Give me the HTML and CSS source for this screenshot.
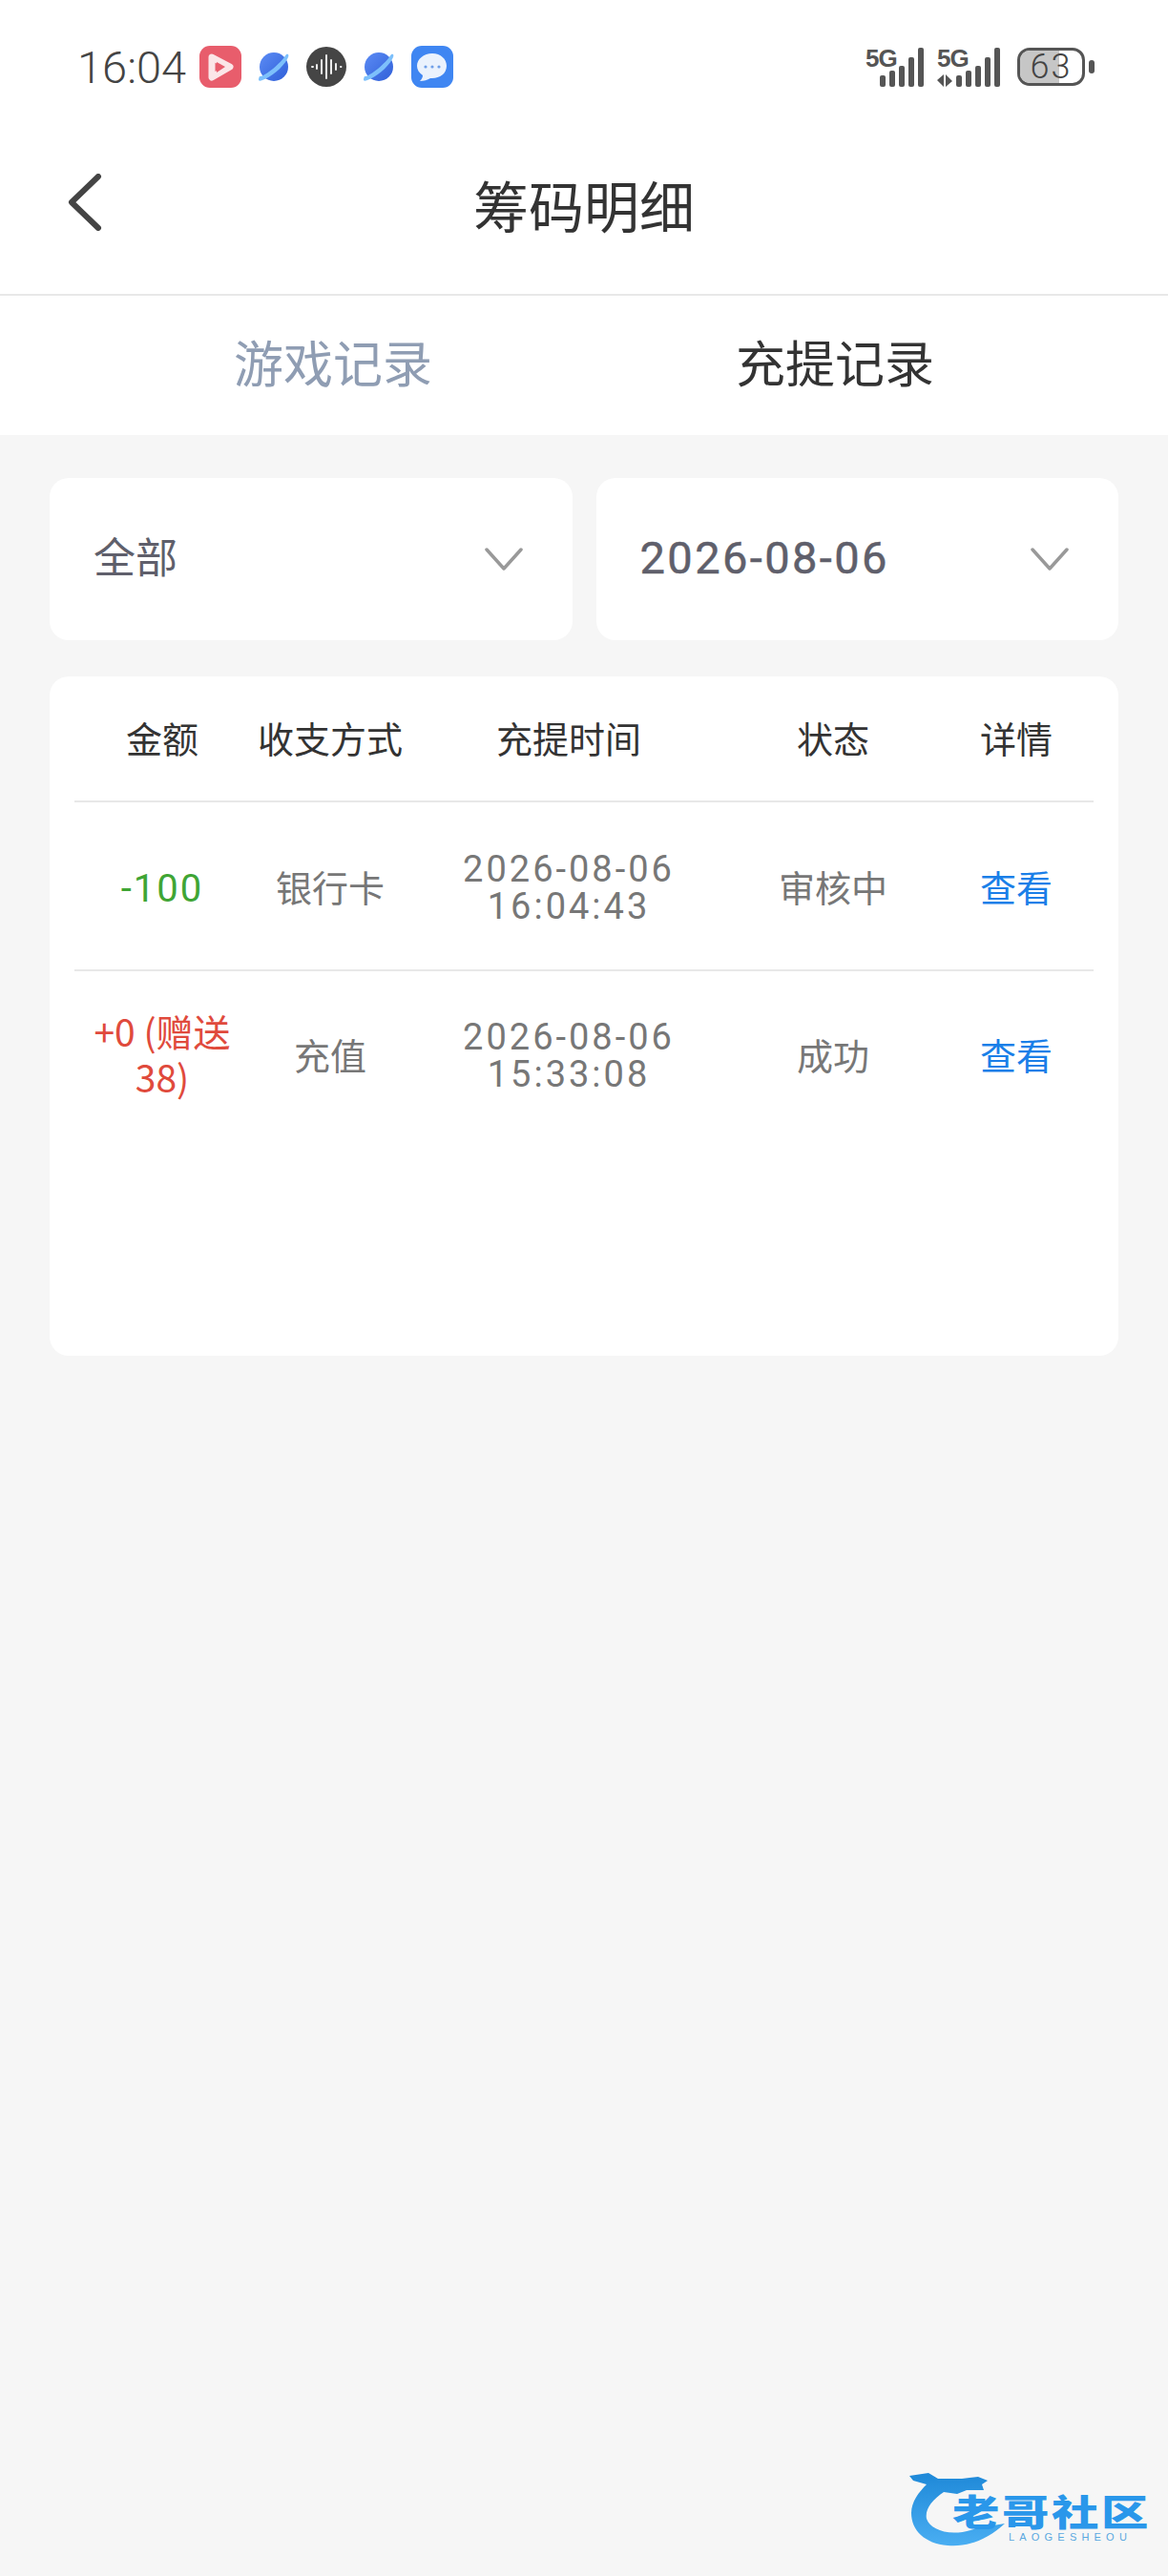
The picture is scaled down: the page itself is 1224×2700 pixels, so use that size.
FILE: index.html
```html
<!DOCTYPE html>
<html lang="zh-CN">
<head>
	<meta charset="utf-8">
	<title>筹码明细</title>
	<link rel="stylesheet" href="styles.css">
</head>
<body>
	<div class="statusBar">
		<div class="statusLeft">
			<span class="clock">16:04</span>
			<svg class="appIcon" width="44" height="44" viewBox="0 0 44 44">
				<rect width="44" height="44" rx="11" fill="#e85d6c"/>
				<path d="M13 12 L32 22 L13 33 Z" fill="#e85d6c" stroke="#fbe6e8" stroke-width="7" stroke-linejoin="round"/>
				<path d="M18 17 L27 22 L18 28 Z" fill="#e85d6c"/>
			</svg>
			<svg class="planet" width="34" height="34" viewBox="0 0 34 34">
				<defs>
					<linearGradient id="planetFill" x1="0" y1="0" x2="1" y2="1">
						<stop offset="0" stop-color="#5c8cf5"/>
						<stop offset="1" stop-color="#2f5fd8"/>
					</linearGradient>
				</defs>
				<circle cx="17" cy="17" r="15" fill="url(#planetFill)"/>
				<path d="M30 4 C33 3 33 6 31 9 C26 18 14 28 5 31 C1 33 0 31 2 27 C6 28 24 14 30 4 Z" fill="#7dc0fb"/>
			</svg>
			<svg class="voice" width="42" height="42" viewBox="0 0 42 42">
				<circle cx="21" cy="21" r="21" fill="#454545"/>
				<g stroke="#fff" stroke-width="1.8" stroke-linecap="round">
					<path d="M6 21h1M11 19v4M16 14v14M21 9v24M26 14v14M31 18v6M36 21h.5"/>
				</g>
			</svg>
			<svg class="planet secondPlanet" width="34" height="34" viewBox="0 0 34 34">
				<circle cx="17" cy="17" r="15" fill="url(#planetFill)"/>
				<path d="M30 4 C33 3 33 6 31 9 C26 18 14 28 5 31 C1 33 0 31 2 27 C6 28 24 14 30 4 Z" fill="#7dc0fb"/>
			</svg>
			<svg class="appIcon" width="44" height="44" viewBox="0 0 44 44">
				<rect width="44" height="44" rx="11" fill="#3f86f2"/>
				<path d="M22 8 C31 8 37 14 37 21 C37 29 30 34 22 34 L20 34 C17 36 13 37 9 37 C11 35 12 33 12 31 C8 28 6 25 6 21 C6 14 13 8 22 8 Z" fill="#eaf2fd"/>
				<circle cx="15" cy="22" r="1.6" fill="#6f9fe8"/>
				<circle cx="22" cy="22" r="1.6" fill="#6f9fe8"/>
				<circle cx="29" cy="22" r="1.6" fill="#6f9fe8"/>
			</svg>
		</div>
		<div class="statusRight">
			<div class="signal">
				<span class="netType">5G</span>
				<svg width="47" height="41" viewBox="0 0 47 41" class="bars">
					<rect x="0" y="29" width="6" height="12" rx="2"/>
					<rect x="10" y="24" width="6" height="17" rx="2"/>
					<rect x="20" y="19" width="6" height="22" rx="2"/>
					<rect x="30" y="10" width="6" height="31" rx="2"/>
					<rect x="40" y="0" width="6" height="41" rx="2"/>
				</svg>
			</div>
			<div class="signal secondSignal">
				<span class="netType">5G</span>
				<svg width="66" height="41" viewBox="0 0 66 41" class="bars">
					<path d="M0 34 L7 28 V41 Z M9 28 V41 L16 35 Z"/>
					<rect x="20" y="29" width="6" height="12" rx="2"/>
					<rect x="30" y="24" width="6" height="17" rx="2"/>
					<rect x="40" y="19" width="6" height="22" rx="2"/>
					<rect x="50" y="10" width="6" height="31" rx="2"/>
					<rect x="60" y="0" width="6" height="41" rx="2"/>
				</svg>
			</div>
			<div class="battery">
				<div class="batteryBody">
					<div class="batteryLevel" style="width: 63%"></div>
					<span class="batteryText">63</span>
				</div>
				<div class="batteryTip"></div>
			</div>
		</div>
	</div>

	<div class="navBar">
		<svg class="backIcon" width="36" height="60" viewBox="0 0 36 60">
			<path d="M32 3 L4 30 L32 57" fill="none" stroke="#444" stroke-width="6" stroke-linecap="round" stroke-linejoin="round"/>
		</svg>
		<h1 class="navTitle">筹码明细</h1>
	</div>

	<div class="tabs">
		<span class="tab">游戏记录</span>
		<span class="tab active">充提记录</span>
	</div>

	<div class="content">
		<div class="filters">
			<div class="filter">
				<span>全部</span>
				<svg width="40" height="24" viewBox="0 0 40 24">
					<path d="M2 2 L20 22 L38 2" fill="none" stroke="#999" stroke-width="3.5" stroke-linecap="round" stroke-linejoin="round"/>
				</svg>
			</div>
			<div class="filter">
				<span class="filterDate">2026-08-06</span>
				<svg width="40" height="24" viewBox="0 0 40 24">
					<path d="M2 2 L20 22 L38 2" fill="none" stroke="#999" stroke-width="3.5" stroke-linecap="round" stroke-linejoin="round"/>
				</svg>
			</div>
		</div>

		<div class="recordCard">
			<div class="row headRow">
				<div>金额</div>
				<div>收支方式</div>
				<div>充提时间</div>
				<div>状态</div>
				<div>详情</div>
			</div>
			<div class="row">
				<div class="minus">-100</div>
				<div>银行卡</div>
				<div class="time">2026-08-06<br>16:04:43</div>
				<div>审核中</div>
				<div class="link">查看</div>
			</div>
			<div class="row lastRow">
				<div class="plus">+0 (赠送38)</div>
				<div>充值</div>
				<div class="time">2026-08-06<br>15:33:08</div>
				<div>成功</div>
				<div class="link">查看</div>
			</div>
		</div>
	</div>

	<div class="watermark">
		<svg class="dragon" width="104" height="80" viewBox="0 0 104 80">
			<defs>
				<linearGradient id="dragonFill" x1="0" y1="0" x2="0" y2="1">
					<stop offset="0" stop-color="#1e88d8"/>
					<stop offset="1" stop-color="#4aaef2"/>
				</linearGradient>
			</defs>
			<path d="M0 5 L20 2 L30 8 L55 8 L72 6 L82 10 L76 14 L78 20 L60 20 L50 24 L36 22 C24 30 16 40 18 50 C22 62 44 70 70 60 L100 55 C82 72 60 80 40 78 C16 76 2 62 2 44 C2 32 10 22 18 14 L4 10 Z" fill="url(#dragonFill)"/>
		</svg>
		<div class="logoText">
			<span class="logoName">老哥社区</span>
			<span class="logoSub">LAOGESHEOU</span>
		</div>
	</div>
</body>
</html>
```

FILE: styles.css
```css
* {
	box-sizing: border-box;
}

html, body {
	margin: 0;
	padding: 0;
}

body {
	position: relative;
	height: 2700px;
	overflow: hidden;
	background-color: #f6f6f6;
	color: #333;
	font-family: "Noto Sans CJK SC", Roboto, sans-serif;
}

.statusBar {
	display: flex;
	justify-content: space-between;
	align-items: center;
	height: 140px;
	padding: 0 77px 0 81px;
	background-color: #fff;
}

.statusLeft, .statusRight {
	display: flex;
	align-items: center;
}

.clock {
	width: 128px;
	font-family: Roboto, sans-serif;
	font-weight: 300;
	font-size: 47px;
	color: #444;
}

.planet {
	margin-left: 17px;
}

.voice {
	margin-left: 17px;
}

.secondPlanet {
	margin-left: 17px;
	margin-right: 17px;
}

.signal {
	display: flex;
	align-items: flex-end;
	position: relative;
	height: 41px;
	width: 62px;
	justify-content: flex-end;
}

.secondSignal {
	width: 66px;
	margin-left: 13px;
}

.netType {
	position: absolute;
	left: 0;
	top: -4px;
	font-family: "Liberation Sans", sans-serif;
	font-weight: 700;
	font-size: 26px;
	line-height: 30px;
	letter-spacing: -1px;
	color: #555;
}

.bars {
	fill: #555;
	display: block;
}

.battery {
	display: flex;
	align-items: center;
	margin-left: 18px;
}

.batteryBody {
	position: relative;
	width: 71px;
	height: 40px;
	border: 3px solid #555;
	border-radius: 13px;
	overflow: hidden;
}

.batteryLevel {
	height: 100%;
	background-color: #c6c6c6;
}

.batteryText {
	position: absolute;
	left: 0;
	right: 0;
	top: 0;
	text-align: center;
	font-family: Roboto, sans-serif;
	font-weight: 300;
	font-size: 36px;
	line-height: 34px;
	letter-spacing: 2px;
	color: #444;
}

.batteryTip {
	width: 6px;
	height: 14px;
	margin-left: 4px;
	border-radius: 3px;
	background-color: #555;
}

.navBar {
	position: relative;
	display: flex;
	align-items: center;
	justify-content: center;
	height: 170px;
	background-color: #fff;
	border-bottom: 2px solid #e8e8e8;
}

.backIcon {
	position: absolute;
	left: 71px;
	top: 42px;
}

.navTitle {
	margin: 0 0 20px;
	font-weight: 400;
	font-size: 58px;
	line-height: 80px;
	color: #333;
}

.tabs {
	display: flex;
	justify-content: space-between;
	align-items: center;
	height: 146px;
	padding: 0 245px 8px;
	background-color: #fff;
}

.tab {
	font-size: 52px;
	line-height: 70px;
	color: #8f9db3;
}

.tab.active {
	color: #333;
}

.content {
	padding: 45px 52px 0;
}

.filters {
	display: flex;
	gap: 25px;
}

.filter {
	flex: 1;
	display: flex;
	justify-content: space-between;
	align-items: center;
	height: 170px;
	padding: 0 52px 0 46px;
	border-radius: 20px;
	background-color: #fff;
	font-size: 44px;
	color: #5f5f6b;
}

.filter span {
	position: relative;
	top: -4px;
}

.filter .filterDate {
	top: -2px;
	font-family: Roboto, sans-serif;
	font-weight: 400;
	font-size: 47px;
	letter-spacing: 2.4px;
	-webkit-text-stroke: 0.5px #5f5f6b;
}

.recordCard {
	height: 712px;
	margin-top: 38px;
	padding: 0 26px;
	border-radius: 20px;
	background-color: #fff;
}

.row {
	display: grid;
	grid-template-columns: 184px 168px 332px 222px 162px;
	align-items: center;
	height: 177px;
	border-bottom: 2px solid #e8e8e8;
	text-align: center;
	font-size: 38px;
	line-height: 39px;
	color: #777;
}

.headRow {
	height: 132px;
	padding-bottom: 3px;
	color: #333;
}

.lastRow {
	height: 172px;
	border-bottom: none;
}

.minus {
	padding-top: 5px;
	font-family: Roboto, sans-serif;
	font-size: 40px;
	letter-spacing: 2px;
	color: #3fa535;
}

.plus {
	padding: 0 14px;
	font-size: 39px;
	line-height: 48px;
	color: #e04a3c;
}

.time {
	padding-top: 4px;
	font-family: Roboto, sans-serif;
	letter-spacing: 3px;
}

.lastRow .time {
	padding-top: 6px;
}

.link {
	color: #1a7fe8;
}

.watermark {
	position: absolute;
	left: 953px;
	top: 2590px;
	width: 260px;
	height: 80px;
}

.dragon {
	position: absolute;
	left: 0;
	top: 0;
}

.logoText {
	position: absolute;
	left: 45px;
	top: 20px;
	display: flex;
	flex-direction: column;
	align-items: flex-start;
}

.logoName {
	font-weight: 900;
	font-size: 38px;
	line-height: 42px;
	letter-spacing: 2px;
	white-space: nowrap;
	color: #2a97ea;
	transform: scaleX(1.3);
	transform-origin: left center;
}

.logoSub {
	margin: 1px 0 0 59px;
	font-family: "Liberation Sans", sans-serif;
	font-size: 11px;
	line-height: 12px;
	letter-spacing: 5.2px;
	white-space: nowrap;
	color: #5aa8e0;
}
```
